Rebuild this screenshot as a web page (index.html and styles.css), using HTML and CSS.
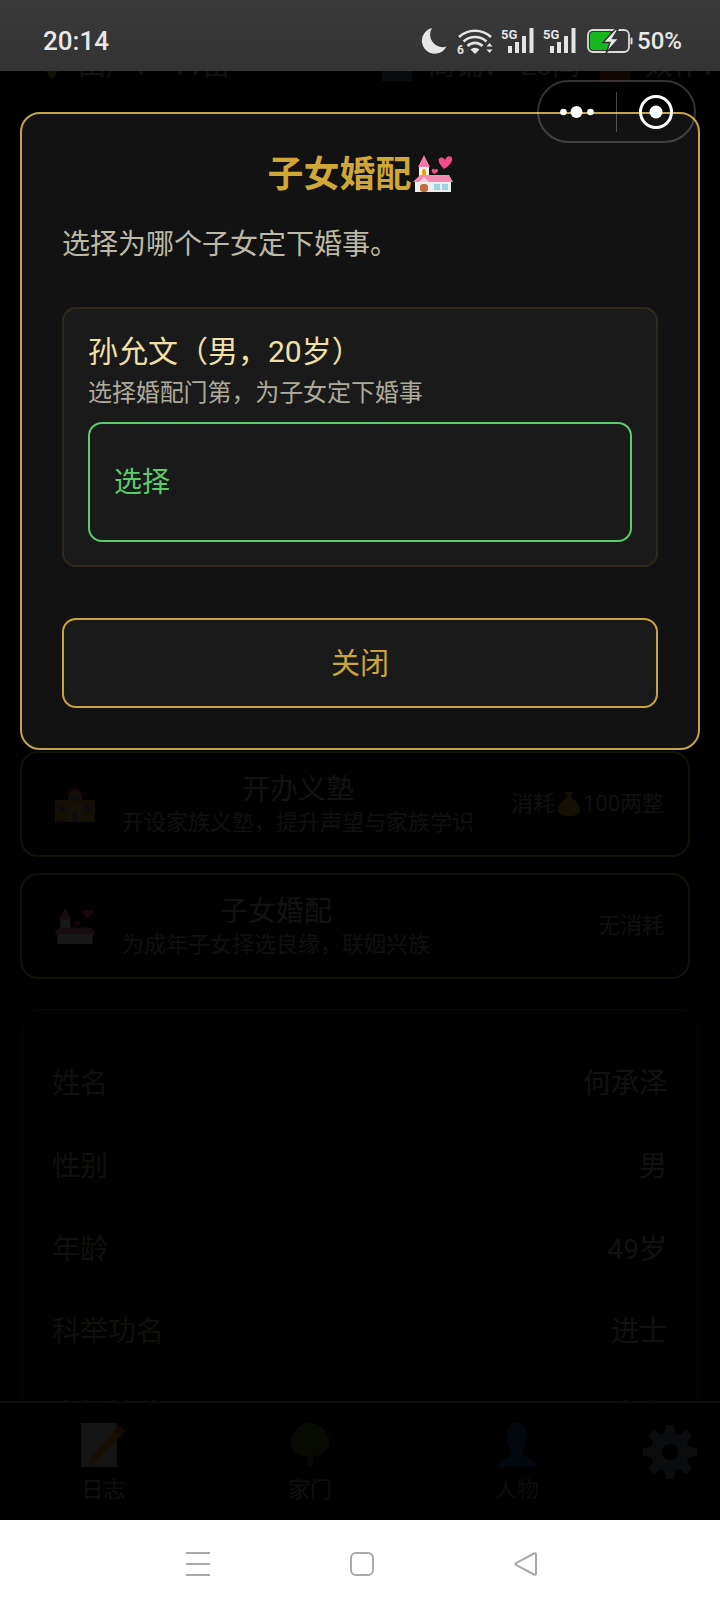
FILE: index.html
```html
<!DOCTYPE html>
<html lang="zh-CN">
<head>
<meta charset="utf-8">
<title>子女婚配</title>
<link rel="stylesheet" href="styles.css">
</head>
<body>
<div class="app">
  <header class="status">
    <span class="clock">20:14</span>
    <div class="status-icons">
      <svg class="ic-moon" viewBox="0 0 26 27"><path d="M11 1A13 13 0 1 0 25.500 19.500A12.500 12.500 0 0 1 11 1Z" fill="#e6e6e6"/></svg>
      <svg class="ic-wifi" viewBox="0 0 37 26">
        <g fill="none" stroke="#e4e4e4" stroke-width="2.600">
          <path d="M2 9A23.500 23.500 0 0 1 34 9"/>
          <path d="M6.500 13.500A17 17 0 0 1 29.500 13.500"/>
          <path d="M10.500 18A10.500 10.500 0 0 1 25.500 18"/>
        </g>
        <path d="M13.500 21.500A7 7 0 0 1 22.500 21.500L18 26Z" fill="#e4e4e4"/>
        <text class="wifi-six" x="0" y="25.500">6</text>
        <path d="M29.500 18.500h6l-3-3.500ZM29.500 21.500h6l-3 3.500Z" fill="#e4e4e4"/>
      </svg>
      <svg class="ic-signal" viewBox="0 0 33 26">
        <text class="sig-text" x="0" y="10.500">5G</text>
        <g fill="#e4e4e4"><rect x="7" y="18" width="4" height="7"/><rect x="14" y="14" width="4" height="11"/><rect x="21" y="8" width="4" height="17"/><rect x="28.500" y="0" width="4" height="25"/></g>
      </svg>
      <svg class="ic-signal" viewBox="0 0 33 26">
        <text class="sig-text" x="0" y="10.500">5G</text>
        <g fill="#e4e4e4"><rect x="7" y="18" width="4" height="7"/><rect x="14" y="14" width="4" height="11"/><rect x="21" y="8" width="4" height="17"/><rect x="28.500" y="0" width="4" height="25"/></g>
      </svg>
      <svg class="ic-battery" viewBox="0 0 46 24">
        <rect x="1" y="1" width="41" height="22" rx="5" fill="none" stroke="#dcdcdc" stroke-width="1.800"/>
        <path d="M3 6a3 3 0 0 1 3-3h17v18H6a3 3 0 0 1-3-3Z" fill="#15b71f"/>
        <rect x="43.500" y="8.500" width="2" height="7" rx="1" fill="#dcdcdc"/>
        <path d="M28 0.500L16 13.500h7L19 24L32 9.500h-6.500L31 .5Z" fill="#e8e8e8" stroke="#333" stroke-width="1.400"/>
      </svg>
      <span class="percent">50%</span>
    </div>
  </header>

  <main class="viewport">
    <div class="scroll">
      <div class="assets">
        <div class="asset-group">
          <svg class="asset-icon" viewBox="0 0 24 30"><path d="M12 28C4 20 3 12 12 3C21 12 20 20 12 28Z" fill="#d8b030"/></svg>
          <span>田产</span><span class="asset-colon">：</span><span class="asset-val">11亩</span>
        </div>
        <div class="asset-group">
          <svg class="asset-icon wide" viewBox="0 0 30 30"><rect width="30" height="30" fill="#5a7f9a"/></svg>
          <span>商铺</span><span class="asset-colon">：</span><span class="asset-val">20间</span>
          <svg class="asset-icon wide" viewBox="0 0 30 30"><rect width="30" height="30" fill="#a8402a"/></svg>
          <span>奴仆</span><span class="asset-end">：</span>
        </div>
      </div>

      <ul class="actions">
        <li class="action">
          <svg class="action-icon" viewBox="0 0 40 36">
            <path d="M20 0L29 9H11Z" fill="#b03020"/>
            <circle cx="20" cy="12" r="7" fill="#d8a040"/>
            <circle cx="20" cy="12" r="4.500" fill="#6a90b0"/>
            <rect x="0" y="14" width="40" height="22" fill="#c89838"/>
            <rect x="13" y="19" width="14" height="17" fill="#e0b050"/>
            <rect x="4" y="20" width="6" height="6" fill="#5a88b0"/>
            <rect x="30" y="20" width="6" height="6" fill="#5a88b0"/>
            <rect x="17" y="26" width="6" height="10" fill="#5a88b0"/>
          </svg>
          <div class="action-text">
            <div class="action-title">开办义塾</div>
            <div class="action-desc">开设家族义塾，提升声望与家族学识</div>
          </div>
          <div class="action-cost">消耗<svg class="cost-bag" viewBox="0 0 22 24"><path d="M7 0h8l-2 6c6 3 9 8 9 12c0 4-4 6-11 6S0 22 0 18c0-4 3-9 9-12Z" fill="#d8a030"/></svg>100两整</div>
        </li>
        <li class="action">
          <svg class="action-icon" viewBox="0 0 40 37">
            <path d="M10 0L16 12H4Z" fill="#ea7aa8"/>
            <rect x="5" y="12" width="10" height="10" fill="#f0f0f0"/>
            <path d="M0 24L4 20H36L40 24V28H0Z" fill="#ea7aa8"/>
            <rect x="2" y="27" width="36" height="10" fill="#e8eef0"/>
            <path d="M32 10C28 6 27 3 30 2C32 1.500 33 3 33.500 4C34.500 2.500 36 1.500 38 2.500C40 4 38 8 32 10Z" fill="#e8457c"/>
            <path d="M22 18C19.500 16 19 14 20.500 13.500C21.500 13 22.500 14 22.800 14.500C23.500 13.500 24.500 13 25.500 14C26 15.500 25 17 22 18Z" fill="#e8457c"/>
          </svg>
          <div class="action-text">
            <div class="action-title">子女婚配</div>
            <div class="action-desc">为成年子女择选良缘，联姻兴族</div>
          </div>
          <div class="action-cost">无消耗</div>
        </li>
      </ul>

      <dl class="profile">
        <div class="profile-row"><dt>姓名</dt><dd>何承泽</dd></div>
        <div class="profile-row"><dt>性别</dt><dd>男</dd></div>
        <div class="profile-row"><dt>年龄</dt><dd>49岁</dd></div>
        <div class="profile-row"><dt>科举功名</dt><dd>进士</dd></div>
        <div class="profile-row"><dt>家族地位</dt><dd>家主</dd></div>
      </dl>
    </div>

    <nav class="tabbar">
      <div class="tab">
        <svg class="tab-icon" viewBox="0 0 44 44">
          <rect x="0" y="0" width="36" height="44" fill="#c8c8c8"/>
          <path d="M38 2L44 8L16 38L8 42L11 33Z" fill="#e09020"/>
          <path d="M38 2L44 8L40 12L34 6Z" fill="#e04040"/>
        </svg>
        <span class="tab-label">日志</span>
      </div>
      <div class="tab">
        <svg class="tab-icon" viewBox="0 0 44 44">
          <path d="M22 0C32 0 39 8 41 16C43 25 36 33 25 33V44H19V33C8 33 1 25 3 16C5 8 12 0 22 0Z" fill="#4a7020"/>
          <rect x="19" y="31" width="6" height="13" fill="#6a4020"/>
        </svg>
        <span class="tab-label">家门</span>
      </div>
      <div class="tab">
        <svg class="tab-icon" viewBox="0 0 44 44">
          <path d="M22 0C31 0 33 8 32 16C31 23 28 28 28 31C30 35 40 37 42 44H2C4 37 14 35 16 31C16 28 13 23 12 16C11 8 13 0 22 0Z" fill="#20508a"/>
        </svg>
        <span class="tab-label tab-active">人物</span>
      </div>
      <div class="tab-gear">
        <svg class="gear" viewBox="0 0 54 54">
          <path d="M23 0h8l1 8 5 2 6-5 6 6-5 6 2 5 8 1v8l-8 1-2 5 5 6-6 6-6-5-5 2-1 8h-8l-1-8-5-2-6 5-6-6 5-6-2-5-8-1v-8l8-1 2-5-5-6 6-6 6 5 5-2Z" fill="#6a7f8e" fill-rule="evenodd"/>
          <circle cx="27" cy="27" r="8" fill="#000"/>
        </svg>
      </div>
    </nav>

    <div class="overlay">
      <section class="modal">
        <h2 class="modal-title">子女婚配<svg class="wedding" viewBox="0 0 40 37">
            <path d="M11 0L17 12H5Z" fill="#f07aa8"/>
            <rect x="6" y="12" width="10" height="11" fill="#f7f2e8"/>
            <rect x="9" y="14" width="4" height="7" rx="2" fill="#e8a020"/>
            <rect x="2" y="25" width="36" height="12" fill="#eaf0ee"/>
            <path d="M0 27L7 20H36L40 27Z" fill="#f48ab2"/>
            <path d="M6 27L11 22L16 27Z" fill="#fbc8dc"/>
            <rect x="7" y="29" width="8" height="8" rx="3" fill="#c86a40"/>
            <rect x="21" y="29" width="6" height="6" fill="#9fd2e0"/>
            <rect x="29" y="29" width="6" height="6" fill="#9fd2e0"/>
            <path d="M31 14C26 9 24 5 27 3C29 2 31 3 32 5C33 2 36 0 38.500 2C40.500 5 38 10 31 14Z" fill="#ee4f8c"/>
            <path d="M21 19C18.500 17 18 14.500 19.500 14C21 13.500 21.500 14.500 22 15C22.500 14 24 13.500 25 14.500C25.500 16 24.500 18 21 19Z" fill="#ee4f8c"/>
          </svg></h2>
        <p class="modal-intro">选择为哪个子女定下婚事。</p>
        <div class="child-card">
          <div class="child-name">孙允文（男，20岁）</div>
          <div class="child-hint">选择婚配门第，为子女定下婚事</div>
          <button class="choose-btn" type="button">选择</button>
        </div>
        <button class="close-btn" type="button">关闭</button>
      </section>
    </div>

    <div class="capsule">
      <div class="capsule-half">
        <svg class="cap-dots" viewBox="0 0 36 12"><circle cx="3.500" cy="6" r="3.300" fill="#fff"/><circle cx="16.500" cy="6" r="6" fill="#fff"/><circle cx="30.500" cy="6" r="3.300" fill="#fff"/></svg>
      </div>
      <span class="capsule-divider"></span>
      <div class="capsule-half">
        <svg class="cap-target" viewBox="0 0 36 36"><circle cx="18" cy="18" r="15.500" fill="none" stroke="#fff" stroke-width="3"/><circle cx="18" cy="18" r="6.500" fill="#fff"/></svg>
      </div>
    </div>
  </main>

  <footer class="sysnav">
    <svg class="sys-menu" viewBox="0 0 24 24"><path d="M0 1H24M0 12H24M0 23H24" stroke="#a8a8a8" stroke-width="2"/></svg>
    <svg class="sys-home" viewBox="0 0 24 24"><rect x="1" y="1" width="22" height="22" rx="5" fill="none" stroke="#a8a8a8" stroke-width="2"/></svg>
    <svg class="sys-back" viewBox="0 0 24 24"><path d="M22 2.500C22 1 21 1 20 1.500L2 11C1 11.600 1 12.400 2 13L20 22.500C21 23 22 23 22 21.500Z" fill="none" stroke="#a8a8a8" stroke-width="2"/></svg>
  </footer>
</div>
</body>
</html>
```

FILE: styles.css
```css
* { box-sizing: border-box; }

html, body {
  margin: 0;
  padding: 0;
  background: #000;
}

body {
  font-family: Roboto, "Noto Sans CJK SC", "Noto Sans", sans-serif;
  text-spacing-trim: space-all;
}

.app {
  width: 720px;
  height: 1608px;
  display: flex;
  flex-direction: column;
  overflow: hidden;
}

/* Status bar */
.status {
  height: 71px;
  flex: none;
  display: flex;
  justify-content: space-between;
  align-items: center;
  padding: 10px 38px 0 43px;
  background: linear-gradient(#3a3a3a, #333);
  color: #e8e8e8;
  position: relative;
  z-index: 2;
}

.clock {
  font-size: 26px;
  font-weight: 500;
  line-height: 32px;
}

.status-icons {
  display: flex;
  align-items: center;
}

.ic-moon { width: 26px; height: 27px; margin-right: 10px; }
.ic-wifi { width: 37px; height: 26px; margin-right: 7px; }
.ic-signal { width: 33px; height: 26px; margin-right: 9px; }
.ic-battery { width: 46px; height: 24px; margin: 0 4px 0 2px; }

.wifi-six {
  font-family: Roboto, sans-serif;
  font-size: 12px;
  font-weight: 700;
  fill: #e4e4e4;
}

.sig-text {
  font-family: Roboto, sans-serif;
  font-size: 13px;
  font-weight: 700;
  fill: #e4e4e4;
}

.percent {
  font-size: 24px;
  font-weight: 500;
  line-height: 30px;
}

/* Page behind the dialog */
.viewport {
  flex: 1;
  min-height: 0;
  position: relative;
  display: flex;
  flex-direction: column;
  overflow: hidden;
  background: #000;
}

.scroll {
  flex: 1;
  min-height: 0;
  overflow: hidden;
}

.assets {
  margin-top: -25px;
  height: 40px;
  padding-left: 40px;
  display: flex;
  justify-content: space-between;
  align-items: center;
  font-size: 28px;
  line-height: 40px;
  color: #aaa;
}

.asset-group {
  display: flex;
  align-items: center;
}

.asset-icon { width: 24px; height: 30px; margin-right: 14px; flex: none; }
.asset-icon.wide { width: 30px; margin-right: 15px; }
.asset-colon { width: 37px; }
.asset-val { margin-right: 20px; }
.asset-end { width: 19px; }

.actions {
  list-style: none;
  margin: 665px 30px 0 20px;
  padding: 0;
  display: flex;
  flex-direction: column;
  gap: 16px;
}

.action {
  height: 106px;
  display: flex;
  align-items: center;
  padding: 0 24px 0 33px;
  border: 2px solid #b89a3a;
  border-radius: 18px;
  background: #0a0a0a;
}

.action-icon {
  width: 40px;
  height: 36px;
  flex: none;
  margin-right: 27px;
}

.action-text {
  text-align: center;
}

.action-title {
  font-size: 28px;
  line-height: 38px;
  color: #bbb;
}

.action-desc {
  font-size: 22px;
  line-height: 28px;
  color: #a0a0a0;
}

.action-cost {
  margin-left: auto;
  display: flex;
  align-items: center;
  font-size: 22px;
  line-height: 30px;
  color: #a0a0a0;
}

.cost-bag { width: 22px; height: 24px; margin: 0 3px 0 3px; }

.profile {
  margin: 30px 22px 0;
  padding: 30px 30px 0 29px;
  border: 1px solid #5a5030;
  border-radius: 18px;
  background: #050505;
}

.profile-row {
  height: 82.700px;
  display: flex;
  justify-content: space-between;
  align-items: center;
  font-size: 28px;
}

.profile-row dt { color: #a89868; }
.profile-row dd { margin: 0; color: #aaa; }

/* Tab bar */
.tabbar {
  height: 119px;
  flex: none;
  display: flex;
  border-top: 2px solid #8a7a30;
  background: #050505;
}

.tab {
  flex: 1;
  display: flex;
  flex-direction: column;
  align-items: center;
  padding-top: 20px;
}

.tab-icon { width: 44px; height: 44px; }

.tab-label {
  font-size: 22px;
  line-height: 30px;
  margin-top: 8px;
  color: #999;
}

.tab-active { color: #8a7a40; }

.tab-gear {
  width: 100px;
  flex: none;
  display: flex;
  justify-content: center;
  padding-top: 22px;
}

.gear { width: 54px; height: 54px; }

/* Dialog */
.overlay {
  position: absolute;
  inset: 0;
  padding: 41px 20px 0;
  background: rgba(0, 0, 0, 0.9);
}

.modal {
  border: 2px solid #c3a448;
  border-radius: 20px;
  padding: 38px 40px 40px;
  background: #121212;
}

.modal-title {
  margin: 0;
  height: 46px;
  display: flex;
  justify-content: center;
  align-items: center;
  gap: 1px;
  font-size: 36px;
  line-height: 46px;
  font-weight: 700;
  color: #cfa638;
}

.wedding { width: 40px; height: 37px; margin-bottom: 4px; }

.modal-intro {
  margin: 26px 0 0;
  font-size: 28px;
  line-height: 42px;
  color: #bdb9a8;
}

.child-card {
  margin-top: 41px;
  height: 260px;
  padding: 23px 24px 0;
  border: 2px solid #2f2a1c;
  border-radius: 14px;
  background: #1a1a1a;
}

.child-name {
  font-size: 30px;
  line-height: 40px;
  color: #efe0a8;
}

.child-hint {
  margin-top: 4px;
  font-size: 24px;
  line-height: 34px;
  letter-spacing: -0.1px;
  color: #aeaa9e;
}

.choose-btn {
  display: block;
  width: 100%;
  height: 120px;
  margin-top: 12px;
  padding: 0 24px 4px;
  border: 2px solid #5ccb70;
  border-radius: 14px;
  background: #1a1a1a;
  color: #5ccb70;
  font-family: inherit;
  font-size: 28px;
  text-align: left;
}

.close-btn {
  display: block;
  width: 100%;
  height: 90px;
  margin-top: 51px;
  padding: 0 0 5px;
  border: 2px solid #c9a63c;
  border-radius: 14px;
  background: #1a1a1a;
  color: #c9a63c;
  font-family: inherit;
  font-size: 29px;
}

/* Mini-program capsule */
.capsule {
  position: absolute;
  top: 9px;
  right: 24px;
  width: 159px;
  height: 63px;
  display: flex;
  align-items: center;
  border: 2px solid rgba(255, 255, 255, 0.2);
  border-radius: 32px;
}

.capsule-half {
  flex: 1;
  display: flex;
  justify-content: center;
  align-items: center;
}

.capsule-divider {
  width: 1px;
  height: 40px;
  background: rgba(255, 255, 255, 0.28);
}

.cap-dots { width: 36px; height: 12px; }
.cap-target { width: 36px; height: 36px; }

/* System navigation */
.sysnav {
  height: 88px;
  flex: none;
  background: #fff;
  display: grid;
  grid-template-columns: 24px 24px 24px;
  column-gap: 140px;
  justify-content: center;
  padding: 32px 0 0 4px;
}

.sys-menu, .sys-home, .sys-back { width: 24px; height: 24px; }
```
